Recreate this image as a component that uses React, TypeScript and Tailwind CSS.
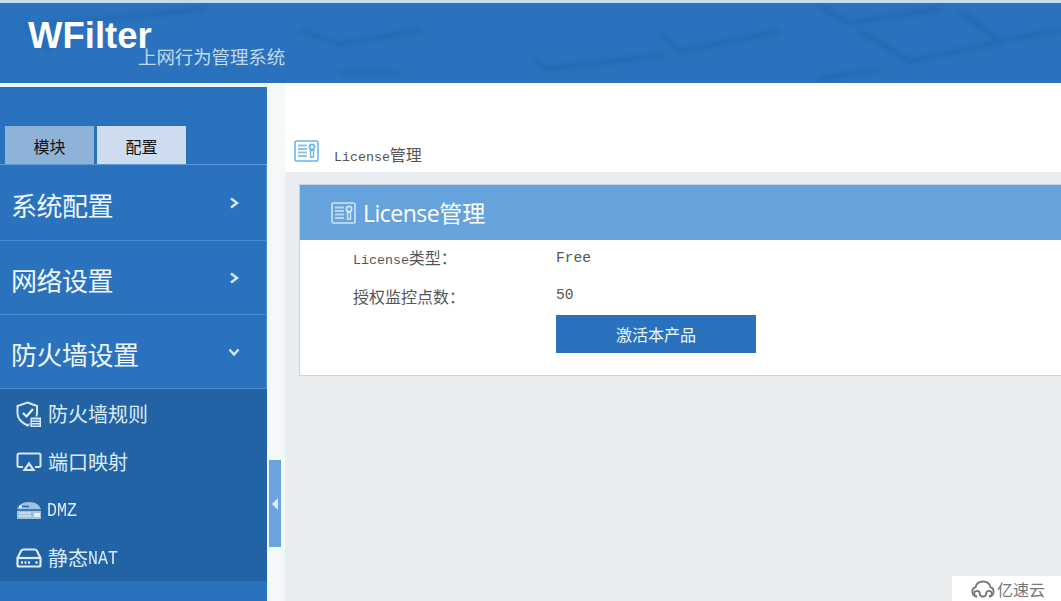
const cjk = "font-['Noto_Sans_CJK_SC',sans-serif]";
const mono = "font-['Liberation_Mono',monospace]";

function LicenseIcon({ color, className }: { color: string; className: string }) {
  return (
    <svg viewBox="0 0 25 22" className={className} fill="none">
      <rect x="1" y="1" width="23" height="20" rx="1.5" stroke={color} strokeWidth="1.6" />
      <path d="M4 5.500h9M4 9h9M4 12.500h9M4 16h9" stroke={color} strokeWidth="2.200" opacity="0.8" />
      <circle cx="18" cy="7" r="2.600" stroke={color} strokeWidth="1.800" />
      <path d="M16.500 10.500h3v6.500h-3z" stroke={color} strokeWidth="1.400" />
    </svg>
  );
}

function Chevron({ down }: { down?: boolean }) {
  return (
    <svg viewBox="0 0 12 12" className="h-[12px] w-[12px]" fill="none">
      <path
        d={down ? "M1.500 3.500 6 8.500l4.500-5" : "M3 1.500 9 6l-6 4.500"}
        stroke="#d6e8f7"
        strokeWidth="2.400"
      />
    </svg>
  );
}

function ShieldIcon() {
  return (
    <svg viewBox="0 0 26 27" className="h-[27px] w-[26px]" fill="none">
      <path d="M11.500 1.500 21 5v7.500c0 5.500-4.500 9.500-9.500 12-5-2.500-10-6.500-10-12V5z" stroke="#d5e6f5" strokeWidth="2" />
      <path d="M7 12l3.500 3.500L17 8" stroke="#e8f3fb" strokeWidth="2.200" />
      <rect x="14" y="16" width="11.500" height="10.500" fill="#dcebf7" stroke="#2263a5" />
      <path d="M16 19h7.500M16 21.500h7.500M16 24h7.500" stroke="#2263a5" />
    </svg>
  );
}

function ScreenIcon() {
  return (
    <svg viewBox="0 0 26 20" className="h-[20px] w-[26px]" fill="none">
      <path d="M7 15H3a1.500 1.500 0 0 1-1.500-1.500V3A1.500 1.500 0 0 1 3 1.500h20A1.500 1.500 0 0 1 24.500 3v10.500A1.500 1.500 0 0 1 23 15h-4" stroke="#d5e6f5" strokeWidth="2" />
      <path d="M13 11.500l4.500 6.500h-9z" stroke="#d5e6f5" strokeWidth="2.200" />
    </svg>
  );
}

function DmzIcon() {
  return (
    <svg viewBox="0 0 26 19" className="h-[19px] w-[26px]" fill="none">
      <path d="M1 9c1-5 5-8 12-8s11 3 12 8v9H1z" fill="#9fc2e0" />
      <path d="M1 9h24" stroke="#2263a5" strokeWidth="1.500" />
      <path d="M4 5.500h9" stroke="#2263a5" strokeWidth="1.500" />
      <rect x="3" y="4.500" width="3" height="2.500" fill="#e3f0fa" />
      <rect x="18" y="12" width="6" height="4" fill="#e3f0fa" />
      <path d="M3 12h12M3 15h12" stroke="#e3f0fa" strokeWidth="1.500" opacity="0.7" />
    </svg>
  );
}

function NatIcon() {
  return (
    <svg viewBox="0 0 26 20" className="h-[20px] w-[26px]" fill="none">
      <path d="M1.500 10 5 3a3 3 0 0 1 2.500-1.500h11A3 3 0 0 1 21 3l3.500 7v7a1.500 1.500 0 0 1-1.500 1.500H3A1.500 1.500 0 0 1 1.500 17z" stroke="#dcebf7" strokeWidth="2.200" />
      <path d="M1.500 10h23" stroke="#dcebf7" strokeWidth="2.200" />
      <path d="M5 14.500h2M8.500 14.500h2M12 14.500h2" stroke="#dcebf7" strokeWidth="2.500" />
      <circle cx="20.500" cy="14.500" r="1.300" fill="#dcebf7" />
    </svg>
  );
}

function CloudIcon() {
  return (
    <svg viewBox="0 0 24 18" className="h-[18px] w-[24px]" fill="none" stroke="#71787e" strokeWidth="1.800">
      <path d="M6 16.500a4.800 4.800 0 0 1-1.500-9.300C5.500 3.500 8.500 1.500 12 1.500s6.500 2 7.500 5.700a4.800 4.800 0 0 1-1.500 9.300" />
      <path d="M6 16.500a2.800 2.800 0 1 1 2.800-2.800c0 1.500 1.200 2.800 3.200 2.800s3.200-1.300 3.200-2.800a2.800 2.800 0 1 1 2.800 2.800" />
    </svg>
  );
}

const menus = [
  { label: "系统配置", h: "h-[76px]" },
  { label: "网络设置", h: "h-[74px]" },
  { label: "防火墙设置", h: "h-[74px]", open: true },
];

const subItems = [
  { icon: <ShieldIcon />, label: "防火墙规则" },
  { icon: <ScreenIcon />, label: "端口映射" },
  { icon: <DmzIcon />, label: "DMZ", latin: true },
  { icon: <NatIcon />, label: "静态", nat: true },
];

export default function App() {
  return (
    <div className={`relative flex h-[601px] w-[1061px] flex-col overflow-hidden bg-white ${cjk}`}>
      <header className="relative h-[83px] shrink-0 overflow-hidden border-t-[3px] border-[#c4dcef] bg-[#2a72bd]">
        <svg viewBox="0 0 1061 80" className="absolute inset-0 h-full w-full blur-[2px]" fill="none" stroke="#1f62a8" strokeWidth="5" opacity="0.5">
          <path d="M25 20l25 28M45 22l160-16" />
          <path d="M300 27l40 14 80-14" />
          <path d="M535 54l10 12 120-14M660 30l20 18 100-20" />
          <path d="M820 4l30 16 90-14M860 28l50 30 95-20M960 8l40 30 65-12" />
          <path d="M400 70h-60M820 75l60-8" />
        </svg>
        <div className="relative ml-[28px] h-full w-[260px]">
          <span className="block pt-[11px] font-['Liberation_Sans',sans-serif] text-[36.5px] font-bold leading-[44px] text-white">
            WFilter
          </span>
          <span className="absolute left-[110px] top-[42px] text-[18.4px] leading-[22px] text-[#c2daee]">
            上网行为管理系统
          </span>
        </div>
      </header>

      <div className="flex min-h-0 flex-1">
        <aside className="flex w-[267px] shrink-0 flex-col bg-[#2a72bd]">
          <div className="h-[4px] shrink-0 bg-[#eaf5fc]" />
          <div className="flex h-[78px] shrink-0 items-end gap-[3px] border-b border-[#5c9bd8] pl-[5px]">
            <div className="flex h-[38px] w-[89px] items-center justify-center bg-[#8fb2d8] pt-[2px] text-[16px] text-[#111]">
              模块
            </div>
            <div className="flex h-[38px] w-[89px] items-center justify-center bg-[#cddcee] pt-[2px] text-[16px] text-[#111]">
              配置
            </div>
          </div>
          {menus.map((m) => (
            <div
              key={m.label}
              className={`flex ${m.h} shrink-0 items-center justify-between border-b border-r border-[#4a8cd0] pl-[11px] pr-[26px] text-[26px] text-[#eef7fd]`}
            >
              <span className="pt-[4px] tracking-[-0.5px]">{m.label}</span>
              <span className="pt-[1px]">
                <Chevron down={m.open} />
              </span>
            </div>
          ))}
          <div className="flex h-[192px] shrink-0 flex-col bg-[#2263a5]">
            {subItems.map((s) => (
              <div key={s.label} className="flex h-[48px] items-center pl-[16px] pt-[2px] text-[20px] text-[#dcecf9]">
                <span className="flex w-[32px] shrink-0 items-center">{s.icon}</span>
                {s.latin ? (
                  <span className={`${mono} inline-block -ml-[1px] scale-y-125 pt-[3px] text-[16.6px]`}>{s.label}</span>
                ) : (
                  <span>{s.label}</span>
                )}
                {s.nat && <span className={`${mono} inline-block scale-y-125 pt-[3px] text-[16.6px]`}>NAT</span>}
              </div>
            ))}
          </div>
        </aside>

        <div className="relative w-[18px] shrink-0 bg-[#f3f8f9]">
          <div className="absolute left-[2px] top-[377px] flex h-[87px] w-[12px] items-center justify-center bg-[#6ba3e0]">
            <div className="h-0 w-0 border-y-[6px] border-r-[6px] border-y-transparent border-r-[#dcecf9]" />
          </div>
        </div>

        <main className="flex min-w-0 flex-1 flex-col bg-[#e9edf0]">
          <div className="flex h-[89px] shrink-0 items-end bg-white pb-[2px] pl-[9px]">
            <LicenseIcon color="#6db4e6" className="mb-[8px] h-[22px] w-[25px]" />
            <span className="ml-[15px] text-[16px] leading-[24px] text-[#555]">
              <span className={`${mono} text-[13.3px]`}>License</span>管理
            </span>
          </div>
          <div className="pl-[14px] pt-[12px]">
            <section className="h-[192px] w-[800px] border border-[#cdd2d6] bg-white">
              <div className="flex h-[55px] items-center bg-[#66a3dc] pl-[31px] text-[23px] text-white">
                <LicenseIcon color="#cfe4f6" className="h-[22px] w-[25px]" />
                <span className="ml-[7px] pt-[1px] font-['Open_Sans',sans-serif]">
                  <span className="tracking-[-0.5px]">License</span>
                  <span className={cjk}>管理</span>
                </span>
              </div>
              <div className="pl-[53px] text-[16px] text-[#555]">
                <div className="flex h-[36px] items-center">
                  <span className="w-[203px]">
                    <span className={`${mono} text-[13.3px]`}>License</span>类型：
                  </span>
                  <span className={`${mono} pt-[1px] text-[14.6px]`}>Free</span>
                </div>
                <div className="flex h-[39px] items-center">
                  <span className="w-[203px]">授权监控点数：</span>
                  <span className={`${mono} text-[14.6px]`}>50</span>
                </div>
                <button className="ml-[203px] h-[38px] w-[200px] bg-[#2a72bd] text-[16px] text-[#eef7fd]">
                  激活本产品
                </button>
              </div>
            </section>
          </div>
        </main>
      </div>

      <div className="absolute left-[952px] top-[576px] flex h-[25px] w-[109px] items-center gap-[2px] bg-white pl-[19px] text-[16px] leading-none text-[#71787e]">
        <CloudIcon />
        <span>亿速云</span>
      </div>
    </div>
  );
}
